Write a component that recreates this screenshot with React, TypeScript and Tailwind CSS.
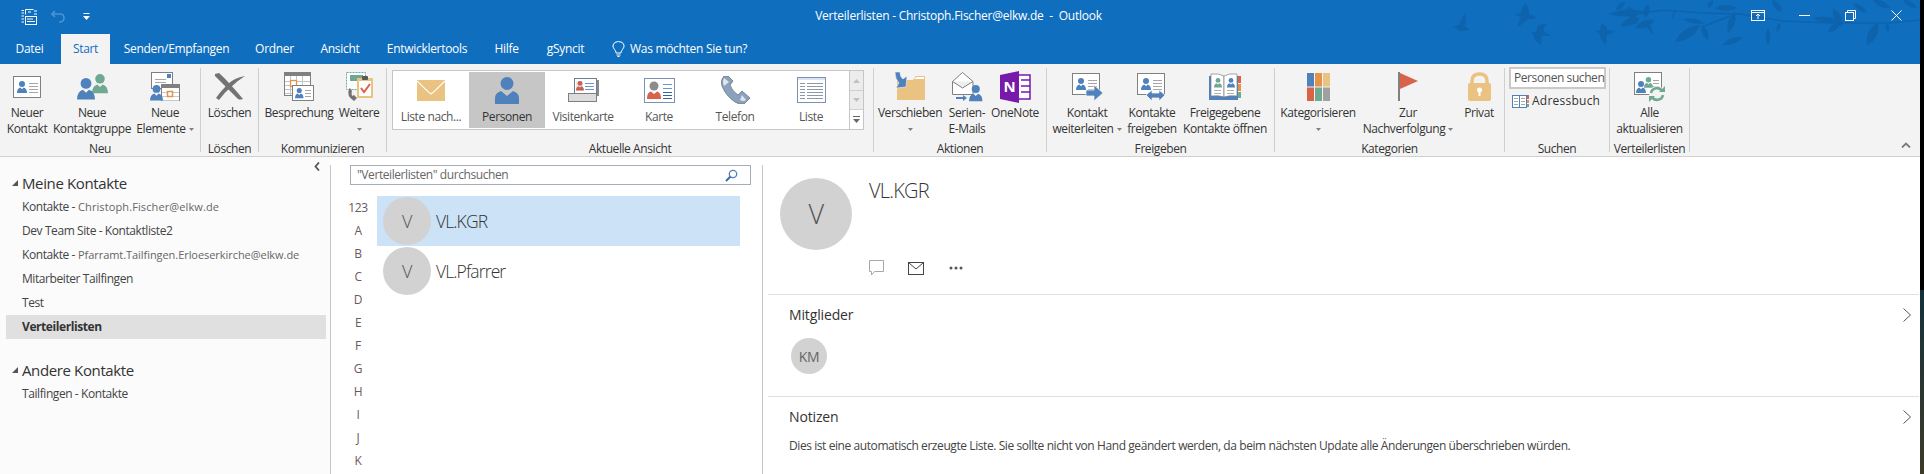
import React from "react";

const B = "#4f81bd", G = "#6fa992", T = "#eac282", O = "#e5924a", R = "#d9634a", GR = "#808080";

const P = ({ x, y, s = 1, c = B }: { x: number; y: number; s?: number; c?: string }) => (
  <g transform={`translate(${x} ${y}) scale(${s})`} fill={c}>
    <circle cx="5" cy="3" r="3" />
    <path d="M0 12Q0 7.500 3.300 6.500L5 8.200L6.700 6.500Q10 7.500 10 12Z" />
  </g>
);
const Lines = ({ x, y, w, n, gap = 3, c = "#a6a6a6" }: { x: number; y: number; w: number; n: number; gap?: number; c?: string }) => (
  <g stroke={c} strokeWidth="1">
    {Array.from({ length: n }).map((_, i) => (
      <path key={i} d={`M${x} ${y + i * gap + 0.5}h${w}`} />
    ))}
  </g>
);
const Card = () => (
  <g>
    <rect x="0.5" y="0.5" width="27" height="21" fill="#fff" stroke={GR} />
    <P x={4} y={5} c={B} />
    <Lines x={16} y={7} w={9} n={4} />
  </g>
);
const IconNewContact = () => <svg width="28" height="22" viewBox="0 0 28 22" className="block"><Card /></svg>;
const IconGroup = () => (
  <svg width="31" height="26" viewBox="0 0 31 26" className="block">
    <P x={15} y={0} s={1.6} c={G} />
    <P x={0} y={4} s={1.8} c={B} />
  </svg>
);
const IconNewItems = () => (
  <svg width="30" height="29" viewBox="0 0 30 29" className="block">
    <rect x="1.500" y="0.500" width="21" height="16" fill="#fff" stroke={GR} />
    <rect x="17" y="2" width="4" height="4" fill={B} />
    <Lines x={5} y={7} w={11} n={2} />
    <rect x="11.500" y="12.500" width="18" height="16" fill="#fff" stroke={GR} />
    <rect x="11" y="12" width="19" height="4" fill={GR} />
    <Lines x={12} y={20} w={17} n={3} gap={4} c="#c9c9c9" />
    <rect x="17.500" y="19.500" width="5" height="5" fill="#fff" stroke={O} strokeWidth="1.500" />
    <P x={0} y={13} s={1.3} c={B} />
  </svg>
);
const IconX = () => (
  <svg width="31" height="27" viewBox="0 0 31 27" className="block">
    <path d="M1 1L5 0Q14 8 29 26Q26 27 24 26Q12 14 1 3Z" fill="#737373" />
    <path d="M31 3Q20 5 14 11Q6 19 2 25L5 27Q10 20 17 14Q23 8 31 3Z" fill="#737373" />
  </svg>
);
const IconMeeting = () => (
  <svg width="30" height="29" viewBox="0 0 30 29" className="block">
    <rect x="0.500" y="0.500" width="26" height="23" fill="#fff" stroke={GR} />
    <rect x="0" y="0" width="27" height="4" fill={GR} />
    <Lines x={1} y={9} w={25} n={4} gap={4} c="#c4c4c4" />
    <g stroke="#c4c4c4"><path d="M6.500 4v19M12.500 4v19M18.500 4v19" /></g>
    <rect x="6.500" y="8.500" width="6" height="6" fill="#fff" stroke={O} strokeWidth="1.300" />
    <rect x="8.500" y="13.500" width="21" height="15" fill="#fff" stroke={GR} />
    <P x={11} y={16} s={0.85} c={B} />
    <Lines x={21} y={18} w={6} n={3} />
  </svg>
);
const IconMore = () => (
  <svg width="29" height="31" viewBox="0 0 29 31" className="block">
    <rect x="1.500" y="1.500" width="19" height="17" fill="#fff" stroke={G} strokeDasharray="2 1" />
    <rect x="5" y="4" width="13" height="6" fill={G} />
    <path d="M4 18Q1 25 9 30L12 27L9 24L7 25Q6 22 7 20L5 17Z" fill="#737373" />
    <rect x="12" y="7" width="16" height="20" fill={T} />
    <rect x="14" y="10" width="12" height="15" fill="#fff" />
    <rect x="17" y="5" width="6" height="4" rx="1" fill="#595959" />
    <path d="M16 17L19 21L25 13" fill="none" stroke={R} strokeWidth="2" />
  </svg>
);
const IconEnv = () => (
  <svg width="28" height="21" viewBox="0 0 28 21" className="block">
    <rect width="28" height="21" fill={T} />
    <path d="M0 1Q12 13 14 14Q16 13 28 1" fill="none" stroke="#fff" strokeWidth="1.200" />
  </svg>
);
const IconPerson = () => (
  <svg width="24" height="27" viewBox="0 0 24 27" className="block">
    <circle cx="12" cy="6.500" r="6.500" fill={B} />
    <path d="M0 27V21Q0 16 6 14L12 19L18 14Q24 16 24 21V27Z" fill={B} />
  </svg>
);
const IconBizCard = () => (
  <svg width="31" height="24" viewBox="0 0 31 24" className="block">
    <rect x="6.500" y="0.500" width="22" height="17" fill="#fff" stroke="#6f7f93" />
    <path d="M29 2h2v16h-2z" fill="#8a8a8a" />
    <path d="M8 3h7v10h-7z" fill="#e9e9e9" />
    <P x={8} y={3} s={0.8} c="#c9604d" />
    <Lines x={17} y={5} w={9} n={3} c="#6d95c8" />
    <rect x="0.500" y="15.500" width="28" height="8" fill="#dcdcdc" stroke="#808080" />
  </svg>
);
const IconCard = () => (
  <svg width="31" height="25" viewBox="0 0 31 25" className="block">
    <rect x="0.500" y="0.500" width="30" height="24" fill="#fff" stroke="#7a92b3" />
    <circle cx="10" cy="8" r="4.500" fill="#8c8c8c" />
    <path d="M3 21Q3 14 7 13.500L10 16L13 13.500Q17 14 17 21Z" fill={R} />
    <Lines x={19} y={6} w={9} n={2} gap={4} c="#6d95c8" />
    <Lines x={19} y={14} w={9} n={3} gap={3} c="#38629c" />
  </svg>
);
const IconPhone = () => (
  <svg width="29" height="28" viewBox="0 0 29 28" className="block">
    <path d="M3 0Q-1 4 1 10Q5 20 14 26Q19 29 23 28L29 22L21 15L17 19Q11 15 9 9L12 5L7 0Z" fill="#8ca1bb" stroke="#6a7480" strokeWidth="0.800" />
    <path d="M3 2Q1 6 3 10L8 6Z M19 24Q23 26 25 24L21 19Z" fill="#dfe5ec" />
  </svg>
);
const IconList = () => (
  <svg width="29" height="26" viewBox="0 0 29 26" className="block">
    <rect x="0.500" y="0.500" width="28" height="25" fill="#fff" stroke="#7a92b3" />
    <rect x="1" y="1" width="27" height="2" fill="#dbe4f0" />
    <Lines x={3} y={6} w={5} n={6} c="#8d99a8" />
    <Lines x={10} y={6} w={16} n={6} c="#8d99a8" />
  </svg>
);
const IconMove = () => (
  <svg width="30" height="29" viewBox="0 0 30 29" className="block">
    <path d="M2 8H18L21 4H29Q30 4 30 5V28H2Z" fill={T} />
    <path d="M19 7L22 5H29V7Z" fill="#fff" />
    <path d="M0 0H5Q5 5 8 7L12 4L11 15L1 16L4 11Q0 7 0 0Z" fill={B} stroke="#f3f3f3" strokeWidth="0.600" />
  </svg>
);
const IconMerge = () => (
  <svg width="31" height="30" viewBox="0 0 31 30" className="block">
    <path d="M0.500 9.500L10.500 0.500L21 9.500V22.500H0.500Z" fill="#fff" stroke={GR} />
    <path d="M0.500 9.500L10.500 16L21 9.500" fill="#eee" stroke={GR} />
    <P x={17} y={13} s={1.35} c={B} />
    <path d="M4 25h7v-2l4 3l-4 3v-2h-7z" fill={B} />
  </svg>
);
const IconOneNote = () => (
  <svg width="31" height="32" viewBox="0 0 31 32" className="block">
    <rect x="17" y="4" width="13" height="24" fill="#fff" stroke="#7719aa" strokeWidth="1.500" />
    <path d="M21 9h9M21 15h9M21 21h9" stroke="#7719aa" strokeWidth="1.500" />
    <path d="M0 4L19 0V32L0 28Z" fill="#7719aa" />
    <text x="9.500" y="21" textAnchor="middle" fontSize="15" fontWeight="700" fill="#fff" fontFamily="Open Sans">N</text>
  </svg>
);
const IconForward = () => (
  <svg width="31" height="28" viewBox="0 0 31 28" className="block">
    <Card />
    <path d="M14 17h8v-5l9 8l-9 8v-5h-8z" fill={B} stroke="#f3f3f3" strokeWidth="0.800" />
  </svg>
);
const IconShare = () => (
  <svg width="31" height="28" viewBox="0 0 31 28" className="block">
    <Card />
    <path d="M9 22l6-5v3h7v-3l6 5l-6 6v-3h-7v3z" fill={B} stroke="#f3f3f3" strokeWidth="0.800" />
  </svg>
);
const IconBook = () => (
  <svg width="32" height="27" viewBox="0 0 32 27" className="block">
    <rect x="0" y="3" width="29" height="24" fill={B} />
    <rect x="29" y="3" width="3" height="7" fill={R} />
    <rect x="29" y="11" width="3" height="7" fill={O} />
    <rect x="29" y="19" width="3" height="6" fill={G} />
    <path d="M2 1Q10 0 15 3V24Q10 22 2 23Z" fill="#fff" stroke={GR} strokeWidth="0.700" />
    <path d="M28 1Q20 0 15 3V24Q20 22 28 23Z" fill="#fff" stroke={GR} strokeWidth="0.700" />
    <P x={5} y={5} s={0.8} c={G} />
    <P x={18} y={5} s={0.8} c={B} />
    <Lines x={5} y={17} w={7} n={2} c="#b0b0b0" />
    <Lines x={18} y={17} w={7} n={2} c="#b0b0b0" />
  </svg>
);
const IconCats = () => (
  <svg width="23" height="28" viewBox="0 0 23 28" className="block">
    <rect x="0" y="0" width="7" height="13.500" fill={B} />
    <rect x="8" y="0" width="7" height="13.500" fill={O} />
    <rect x="16" y="0" width="7" height="13.500" fill={T} />
    <rect x="0" y="14.500" width="7" height="13.500" fill={R} />
    <rect x="8" y="14.500" width="7" height="13.500" fill={G} />
    <rect x="16" y="14.500" width="7" height="13.500" fill="#a0a0a0" />
  </svg>
);
const IconFlag = () => (
  <svg width="20" height="29" viewBox="0 0 20 29" className="block">
    <rect x="0" y="0" width="2" height="29" fill={GR} />
    <path d="M2 1L20 9L2 17Z" fill={R} />
  </svg>
);
const IconLock = () => (
  <svg width="23" height="29" viewBox="0 0 23 29" className="block">
    <path d="M4 13V9Q4 2 11.500 2Q19 2 19 9V13" fill="none" stroke={T} strokeWidth="3.500" />
    <rect x="0" y="11" width="23" height="18" rx="2" fill={T} />
    <circle cx="11.500" cy="18" r="2.500" fill="#fff" />
    <rect x="10.500" y="18" width="2" height="6" fill="#fff" />
  </svg>
);
const IconRefresh = () => (
  <svg width="31" height="30" viewBox="0 0 31 30" className="block">
    <rect x="0.500" y="0.500" width="27" height="22" fill="#fff" stroke={GR} />
    <P x={2} y={9} s={1} c={B} />
    <P x={10} y={5} s={0.9} c={G} />
    <Lines x={19} y={8} w={6} n={3} />
    <circle cx="23" cy="22" r="8" fill="#f3f3f3" />
    <path d="M17 21A6 6 0 0 1 28 19M29 23A6 6 0 0 1 18 25" fill="none" stroke={G} strokeWidth="2.600" />
    <path d="M25 20h6v-6zM21 24h-6v6z" fill={G} />
  </svg>
);
const IconAddress = () => (
  <svg width="17" height="13" viewBox="0 0 17 13" className="block">
    <rect x="0.500" y="0.500" width="7" height="12" fill="#fff" stroke={B} />
    <rect x="7.500" y="0.500" width="7" height="12" fill="#fff" stroke={B} />
    <Lines x={2} y={3} w={4} n={3} />
    <Lines x={9} y={3} w={4} n={3} />
    <rect x="15" y="0" width="2" height="4" fill={R} />
    <rect x="15" y="5" width="2" height="3" fill={O} />
    <rect x="15" y="9" width="2" height="3" fill={G} />
  </svg>
);

const Caret = () => (
  <svg width="5" height="3" viewBox="0 0 5 3" className="inline-block align-middle">
    <path d="M0 0h5L2.500 3z" fill="#808080" />
  </svg>
);

const Btn = ({ w, icon, a, b, caret }: { w: string; icon: React.ReactNode; a: string; b?: string; caret?: "inline" | "below" }) => (
  <div className={`${w} flex flex-col items-center shrink-0`}>
    <div className="h-[37px] flex items-center justify-center">{icon}</div>
    <div className="whitespace-nowrap leading-4">{a}</div>
    {b && (
      <div className="whitespace-nowrap leading-4">
        {b}
        {caret === "inline" && (
          <span className="ml-[3px]">
            <Caret />
          </span>
        )}
      </div>
    )}
    {caret === "below" && (
      <div className="h-4 flex items-center">
        <Caret />
      </div>
    )}
  </div>
);

const Group = ({ w, label, children }: { w: string; label: string; children: React.ReactNode }) => (
  <div className={`${w} shrink-0 flex flex-col border-r border-[#d0d0d0]`}>
    <div className="h-[76px] flex">{children}</div>
    <div className="h-[8px] pt-[1px] leading-[8px] text-center whitespace-nowrap">{label}</div>
  </div>
);

const GalleryItem = ({ icon, label, on }: { icon: React.ReactNode; label: string; on?: boolean }) => (
  <div className={`w-[76px] h-[56px] flex flex-col items-center ${on ? "bg-[#c6c6c6]" : ""}`}>
    <div className="h-[36px] flex items-center justify-center">{icon}</div>
    <div className={`whitespace-nowrap leading-4 mt-[1px] ${on ? "text-[#333]" : "text-[#555]"}`}>{label}</div>
  </div>
);

const leaf = (x1: number, y1: number, x2: number, y2: number, w: number) => {
  const mx = (x1 + x2) / 2, my = (y1 + y2) / 2;
  const dx = x2 - x1, dy = y2 - y1;
  const l = Math.hypot(dx, dy) || 1;
  const nx = (-dy / l) * w, ny = (dx / l) * w;
  return `M${x1} ${y1}Q${mx + nx} ${my + ny} ${x2} ${y2}Q${mx - nx} ${my - ny} ${x1} ${y1}Z`;
};
const LEAVES: [number, number, number, number, number][] = [
  [207, 12, 168, 14, 7], [188, 6, 197, 25, 7], [200, 18, 180, 26, 7], [208, 4, 205, 18, 6], [215, 20, 195, 28, 7],
  [205, 20, 213, 34, 4], [185, 2, 176, 10, 5], [260, 25, 235, 42, 9], [265, 23, 243, 19, 5], [262, 25, 268, 40, 6],
  [297, 8, 275, 8, 6], [295, 12, 288, 33, 7], [303, 37, 282, 45, 6], [328, 28, 328, 45, 5], [340, 23, 337, 32, 4],
  [332, 0, 342, 12, 6], [393, 8, 402, 27, 7], [373, 18, 400, 22, 6], [400, 23, 388, 32, 6], [438, 23, 427, 45, 9],
  [447, 23, 448, 32, 4], [413, 3, 427, 13, 5], [433, 0, 450, 8, 6], [463, 0, 477, 8, 5], [273, 0, 268, 8, 4],
];
const Decor = () => (
  <svg width="480" height="50" viewBox="0 0 480 50" className="absolute right-0 top-0 pointer-events-none">
    <g fill="#0e63ad">
      <path d="M25 14Q27 20 25 26L30 30Q24 31 20 31L13 26Q19 26 20 24Q21 18 25 14Z" />
      <path d="M85 3Q90 8 89 14L96 17Q93 20 88 19Q84 24 77 27Q79 21 81 17L75 15Q79 13 81 13Q81 8 85 3Z" />
      <path d="M107 24Q100 23 97 27L97 31L91 33Q93 35 94 35L94 38Q97 43 101 45Q101 39 102 36L111 36Q108 33 104 32Q103 27 107 24Z" />
      <path d="M162 24Q168 26 167 30L174 31Q172 34 167 35L166 45Q160 40 159 33L155 32Q158 31 160 30Q160 27 162 24Z" />
      {LEAVES.map((l, i) => (
        <path key={i} d={leaf(l[0], l[1], l[2], l[3], l[4])} />
      ))}
    </g>
    <path
      d="M205 13Q220 9 235 11L262 13L300 14L343 21L393 23L447 23L480 20M235 11L232 18M262 27L290 16"
      fill="none"
      stroke="#0e63ad"
      strokeWidth="1.500"
    />
  </svg>
);

const TABS: [string, string][] = [
  ["Senden/Empfangen", "w-[133px]"],
  ["Ordner", "w-[63px]"],
  ["Ansicht", "w-[68px]"],
  ["Entwicklertools", "w-[106px]"],
  ["Hilfe", "w-[53px]"],
  ["gSyncit", "w-[65px]"],
];
const LETTERS = ["123", "A", "B", "C", "D", "E", "F", "G", "H", "I", "J", "K"];

const Row = ({ children, on }: { children: React.ReactNode; on?: boolean }) => (
  <div className={`h-6 ml-[6px] mr-[4px] pl-[16px] flex items-center whitespace-nowrap ${on ? "bg-[#e0e0e0] font-bold text-[#333]" : "text-[#444]"}`}>
    {children}
  </div>
);
const Heading = ({ children }: { children: React.ReactNode }) => (
  <div className="h-6 flex items-center pl-[12px] text-[15px] text-[#333] tracking-[-0.025em]">
    <svg width="6" height="6" viewBox="0 0 6 6" className="mr-[4px]">
      <path d="M6 0V6H0Z" fill="#555" />
    </svg>
    {children}
  </div>
);
const Contact = ({ name, on }: { name: string; on?: boolean }) => (
  <div className={`w-[363px] h-[50px] flex items-center pl-[6px] ${on ? "bg-[#cbe2f7]" : ""}`}>
    <div className="w-[48px] h-[48px] rounded-full bg-[#d2d2d2] flex items-center justify-center text-[18px] font-light text-[#555]">V</div>
    <div className="ml-[5px] text-[17.500px] font-light text-[#333] tracking-[-0.05em]">{name}</div>
  </div>
);
const Chevron = () => (
  <svg width="8" height="14" viewBox="0 0 8 14" className="block">
    <path d="M0.500 0.500L7.500 7L0.500 13.500" fill="none" stroke="#555" />
  </svg>
);

export default function App() {
  return (
    <div className="w-[1924px] h-[474px] flex overflow-hidden font-['Open_Sans',sans-serif] text-[12px] tracking-[-0.035em] text-[#333] bg-white">
      <div className="w-[1920px] flex flex-col">
        <header className="relative h-[64px] bg-[#106ebe] text-white shrink-0 tracking-[-0.025em]">
          <Decor />
          <div className="relative h-[34px] grid grid-cols-[1fr_auto_1fr]">
            <div className="flex items-start pl-[21px] pt-[9px]">
              <svg width="16" height="16" viewBox="0 0 16 16" className="block">
                <g fill="none" stroke="#fff">
                  <path d="M4.500 5.500V0.500H12.500" />
                  <path d="M0.500 1.500H3M0.500 4H3M0.500 7H3M0.500 10H3M0.500 13H3" />
                  <rect x="4.500" y="7.500" width="11" height="8" />
                  <path d="M6 10h6M6 12.500h8M7 3h3M13 2h3M13 5h3" />
                </g>
              </svg>
              <svg width="14" height="13" viewBox="0 0 14 13" className="block ml-[14px] mt-[1px]">
                <path d="M4 1L1 4L4 7M1 4H9Q13 4 13 8Q13 12 8 12" fill="none" stroke="#4a94d4" strokeWidth="1.600" />
              </svg>
              <svg width="7" height="7" viewBox="0 0 7 7" className="block ml-[18px] mt-[4px]">
                <path d="M0.500 0.500H6.500" stroke="#fff" />
                <path d="M0 3h7L3.500 7z" fill="#fff" />
              </svg>
            </div>
            <div className="pt-[7px] leading-[18px] whitespace-pre text-[12px] tracking-[-0.02em] pr-[3px]">Verteilerlisten - Christoph.Fischer@elkw.de  -  Outlook</div>
            <div className="flex justify-end items-start pt-[10px] pr-[18px]">
              <svg width="14" height="11" viewBox="0 0 14 11" className="block mr-[34px]">
                <g fill="none" stroke="#fff">
                  <rect x="0.500" y="0.500" width="13" height="10" />
                  <path d="M0.500 2.500H13.500M7 9V4.500M5 6L7 4L9 6" />
                </g>
              </svg>
              <svg width="11" height="1" viewBox="0 0 11 1" className="block mt-[5px] mr-[35px]">
                <path d="M0 0.500H11" stroke="#fff" />
              </svg>
              <svg width="11" height="11" viewBox="0 0 11 11" className="block mr-[35px]">
                <g fill="none" stroke="#fff">
                  <rect x="0.500" y="2.500" width="8" height="8" />
                  <path d="M2.500 2.500V0.500H10.500V8.500H8.500" />
                </g>
              </svg>
              <svg width="11" height="11" viewBox="0 0 11 11" className="block">
                <path d="M0.500 0.500L10.500 10.500M10.500 0.500L0.500 10.500" stroke="#fff" />
              </svg>
            </div>
          </div>
          <nav className="relative h-[30px] flex items-stretch">
            <div className="w-[61px] pr-[2px] flex items-center justify-center">Datei</div>
            <div className="w-[49px] bg-[#f3f3f3] text-[#106ebe] flex items-center justify-center">Start</div>
            {TABS.map(([t, w]) => (
              <div key={t} className={`${w} flex items-center justify-center`}>{t}</div>
            ))}
            <div className="flex items-center ml-[14px]">
              <svg width="13" height="16" viewBox="0 0 13 16" className="block mr-[5px]">
                <path d="M4 12Q4 10 2.500 8.500Q0.500 6 1 4Q2 0.500 6.500 0.500Q11 0.500 12 4Q12.500 6 10.500 8.500Q9 10 9 12ZM4.500 14H8.500M5.500 15.500H7.500" fill="none" stroke="#fff" />
              </svg>
              Was möchten Sie tun?
            </div>
          </nav>
        </header>

        <section className="h-[93px] shrink-0 bg-[#f3f3f3] border-b border-[#d0d0d0] pt-[4px] flex items-start">
          <div className="h-[84px] flex">
            <Group w="w-[201px]" label="Neu">
              <Btn w="w-[54px]" icon={<IconNewContact />} a="Neuer" b="Kontakt" />
              <Btn w="w-[76px]" icon={<IconGroup />} a="Neue" b="Kontaktgruppe" />
              <Btn w="w-[70px]" icon={<IconNewItems />} a="Neue" b="Elemente" caret="inline" />
            </Group>
            <Group w="w-[58px]" label="Löschen">
              <Btn w="w-[57px]" icon={<IconX />} a="Löschen" />
            </Group>
            <Group w="w-[128px]" label="Kommunizieren">
              <Btn w="w-[80px]" icon={<IconMeeting />} a="Besprechung" />
              <Btn w="w-[40px]" icon={<IconMore />} a="Weitere" caret="below" />
            </Group>
            <Group w="w-[487px]" label="Aktuelle Ansicht">
              <div className="ml-[5px] mt-[2px] w-[472px] h-[60px] border border-[#c6c6c6] bg-white flex">
                <div className="flex py-[1px]">
                  <GalleryItem icon={<IconEnv />} label="Liste nach..." />
                  <GalleryItem icon={<IconPerson />} label="Personen" on />
                  <GalleryItem icon={<IconBizCard />} label="Visitenkarte" />
                  <GalleryItem icon={<IconCard />} label="Karte" />
                  <GalleryItem icon={<IconPhone />} label="Telefon" />
                  <GalleryItem icon={<IconList />} label="Liste" />
                </div>
                <div className="ml-auto w-[14px] flex flex-col border-l border-[#c6c6c6]">
                  <div className="h-[20px] bg-[#ececec] border-b border-[#d0d0d0] flex items-center justify-center">
                    <svg width="7" height="4" viewBox="0 0 7 4"><path d="M0 4h7L3.500 0z" fill="#c0c0c0" /></svg>
                  </div>
                  <div className="h-[19px] bg-[#ececec] border-b border-[#d0d0d0] flex items-center justify-center">
                    <svg width="7" height="4" viewBox="0 0 7 4"><path d="M0 0h7L3.500 4z" fill="#c0c0c0" /></svg>
                  </div>
                  <div className="flex-1 flex items-center justify-center">
                    <svg width="7" height="7" viewBox="0 0 7 7"><path d="M0 0.500H7" stroke="#666" /><path d="M0 3h7L3.500 7z" fill="#666" /></svg>
                  </div>
                </div>
              </div>
            </Group>
            <Group w="w-[173px]" label="Aktionen">
              <Btn w="w-[72px]" icon={<IconMove />} a="Verschieben" caret="below" />
              <Btn w="w-[42px]" icon={<IconMerge />} a="Serien-" b="E-Mails" />
              <Btn w="w-[54px]" icon={<IconOneNote />} a="OneNote" />
            </Group>
            <Group w="w-[228px]" label="Freigeben">
              <Btn w="w-[80px]" icon={<IconForward />} a="Kontakt" b="weiterleiten" caret="inline" />
              <Btn w="w-[50px]" icon={<IconShare />} a="Kontakte" b="freigeben" />
              <Btn w="w-[96px]" icon={<IconBook />} a="Freigegebene" b="Kontakte öffnen" />
            </Group>
            <Group w="w-[230px]" label="Kategorien">
              <Btn w="w-[86px]" icon={<IconCats />} a="Kategorisieren" caret="below" />
              <Btn w="w-[94px]" icon={<IconFlag />} a="Zur" b="Nachverfolgung" caret="inline" />
              <Btn w="w-[48px]" icon={<IconLock />} a="Privat" />
            </Group>
            <Group w="w-[105px]" label="Suchen">
              <div className="ml-[4px] -mt-[1px] flex flex-col">
                <div className="w-[97px] h-[22px] border-2 border-[#c9c9c9] bg-white flex items-center pl-[3px] text-[#555] whitespace-nowrap">Personen suchen</div>
                <div className="mt-[3px] ml-[3px] h-[18px] flex items-center">
                  <IconAddress />
                  <span className="ml-[3px] tracking-[0.02em]">Adressbuch</span>
                </div>
              </div>
            </Group>
            <Group w="w-[80px]" label="Verteilerlisten">
              <Btn w="w-[79px]" icon={<IconRefresh />} a="Alle" b="aktualisieren" />
            </Group>
          </div>
          <div className="ml-auto mt-[74px] mr-[9px]">
            <svg width="10" height="6" viewBox="0 0 10 6" className="block">
              <path d="M1 5.500L5 1.500L9 5.500" fill="none" stroke="#7a7a7a" strokeWidth="1.800" />
            </svg>
          </div>
        </section>

        <main className="flex flex-1 min-h-0">
          <aside className="w-[330px] shrink-0 bg-[#fbfbfb]">
            <div className="h-[14px] flex justify-end items-end pr-[10px]">
              <svg width="6" height="9" viewBox="0 0 6 9" className="block">
                <path d="M5 0.500L1.500 4.500L5 8.500" fill="none" stroke="#555" strokeWidth="1.800" />
              </svg>
            </div>
            <Heading>Meine Kontakte</Heading>
            <Row>Kontakte - <span className="ml-[3px] text-[11px] text-[#666] tracking-[0.01em]">Christoph.Fischer@elkw.de</span></Row>
            <Row>Dev Team Site - Kontaktliste2</Row>
            <Row>Kontakte - <span className="ml-[3px] text-[11px] text-[#666] tracking-[-0.005em]">Pfarramt.Tailfingen.Erloeserkirche@elkw.de</span></Row>
            <Row>Mitarbeiter Tailfingen</Row>
            <Row>Test</Row>
            <Row on>Verteilerlisten</Row>
            <div className="h-[19px]" />
            <Heading>Andere Kontakte</Heading>
            <Row>Tailfingen - Kontakte</Row>
          </aside>
          <div className="w-[1px] mt-[8px] bg-[#c6c6c6] shrink-0" />

          <div className="w-[431px] shrink-0">
            <div className="ml-[19px] mt-[8px] w-[401px] h-[20px] border border-[#a5adb8] flex items-center justify-between pl-[6px] pr-[12px] text-[#666]">
              <span>"Verteilerlisten" durchsuchen</span>
              <svg width="13" height="13" viewBox="0 0 13 13" className="block">
                <circle cx="8" cy="5" r="3.700" fill="none" stroke={B} strokeWidth="1.300" />
                <path d="M5.500 7.500L1 12" stroke="#3b6ca8" strokeWidth="2" />
              </svg>
            </div>
            <div className="mt-[11px] flex">
              <div className="ml-[9px] w-[37px] text-[#6a5a5a]">
                {LETTERS.map((l) => (
                  <div key={l} className="h-[23px] flex items-center justify-center pr-[1px]">{l}</div>
                ))}
              </div>
              <div>
                <Contact name="VL.KGR" on />
                <Contact name="VL.Pfarrer" />
              </div>
            </div>
          </div>
          <div className="w-[1px] mt-[8px] bg-[#c6c6c6] shrink-0" />

          <div className="flex-1 min-w-0">
            <div className="h-[137px] flex pl-[17px] pt-[21px]">
              <div className="w-[72px] h-[72px] rounded-full bg-[#d2d2d2] flex items-center justify-center text-[27px] font-light text-[#555]">V</div>
              <div className="ml-[17px]">
                <div className="-mt-[1px] h-[28px] flex items-center text-[20px] font-light text-[#333] tracking-[-0.04em]">VL.KGR</div>
                <div className="mt-[55px] flex items-center">
                  <svg width="15" height="16" viewBox="0 0 15 16" className="block">
                    <path d="M0.500 0.500H14.500V11.500H5.500L2.500 15V11.500H0.500Z" fill="none" stroke="#a8a8a8" />
                  </svg>
                  <svg width="16" height="13" viewBox="0 0 16 13" className="block ml-[24px]">
                    <rect x="0.500" y="0.500" width="15" height="12" fill="none" stroke="#444" />
                    <path d="M0.500 0.500L8 7L15.500 0.500" fill="none" stroke="#444" />
                  </svg>
                  <svg width="14" height="4" viewBox="0 0 14 4" className="block ml-[25px]">
                    <g fill="#555"><circle cx="2" cy="2" r="1.500" /><circle cx="7" cy="2" r="1.500" /><circle cx="12" cy="2" r="1.500" /></g>
                  </svg>
                </div>
              </div>
            </div>
            <div className="ml-[5px] mr-[1px] border-t border-[#e0e0e0] h-[102px] pl-[21px] pr-[8px]">
              <div className="h-[39px] flex items-center justify-between text-[14px] tracking-[-0.01em] text-[#333]">
                <span>Mitglieder</span>
                <Chevron />
              </div>
              <div className="mt-[4px] ml-[2px] w-[36px] h-[36px] rounded-full bg-[#d2d2d2] flex items-center justify-center text-[14px] text-[#666]">KM</div>
            </div>
            <div className="ml-[5px] mr-[1px] border-t border-[#e0e0e0] pl-[21px] pr-[8px]">
              <div className="h-[39px] flex items-center justify-between text-[14px] tracking-[-0.01em] text-[#333]">
                <span>Notizen</span>
                <Chevron />
              </div>
              <div className="mt-[2px] leading-4 text-[#444] whitespace-nowrap">Dies ist eine automatisch erzeugte Liste. Sie sollte nicht von Hand geändert werden, da beim nächsten Update alle Änderungen überschrieben würden.</div>
            </div>
          </div>
        </main>
      </div>
      <div className="w-[4px] flex flex-col shrink-0">
        <div className="h-[290px] bg-black" />
        <div className="flex-1 bg-gradient-to-b from-[#12303a] to-[#3c3a28]" />
      </div>
    </div>
  );
}
